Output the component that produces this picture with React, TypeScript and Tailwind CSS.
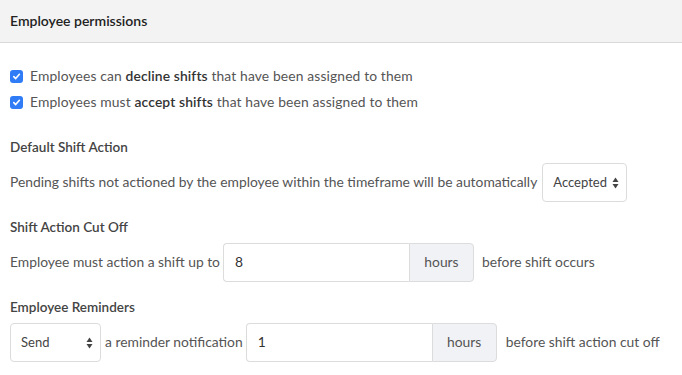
import React from "react";

const Check = () => (
  <span className="flex h-[13px] w-[13px] shrink-0 items-center justify-center rounded-[3px] bg-[#2f7cf6]">
    <svg width="9" height="9" viewBox="0 0 10 10" fill="none">
      <path d="M2 5.2 L4.1 7.3 L8.2 2.6" stroke="white" strokeWidth="1.8" strokeLinecap="round" strokeLinejoin="round" />
    </svg>
  </span>
);

const Arrows = () => (
  <svg width="7" height="12" viewBox="0 0 7 12" className="shrink-0">
    <path d="M3.5 0.5 L6.5 5 L0.5 5 Z" fill="#444" />
    <path d="M3.5 11.5 L6.5 7 L0.5 7 Z" fill="#444" />
  </svg>
);

const Select = ({ value, w }: { value: string; w: string }) => (
  <div className={`flex h-[39px] ${w} shrink-0 items-center justify-between rounded-[4px] border border-[#dcdcdc] bg-white pl-[10px] pr-[7px] text-[13px] text-[#444]`}>
    <span>{value}</span>
    <Arrows />
  </div>
);

const HoursInput = ({ value }: { value: string }) => (
  <div className="flex h-[39px] shrink-0">
    <div className="flex w-[186px] items-center rounded-l-[4px] border border-r-0 border-[#dcdcdc] bg-white pl-[11px] text-[#333]">
      {value}
    </div>
    <div className="flex w-[65px] items-center justify-center rounded-r-[4px] border border-[#dcdcdc] bg-[#f1f2f5] text-[#555]">
      hours
    </div>
  </div>
);

export default function App() {
  return (
    <div className="h-[375px] w-[682px] overflow-hidden bg-white text-[13.85px] text-[#555]" style={{ fontFamily: "Lato, 'Open Sans', sans-serif" }}>
      <div className="flex h-[43px] items-center border-b border-[#d8d8d8] bg-[#f3f3f3] px-[10px] pb-[2px] text-[#222]">
        <span className="text-[14px] font-semibold">Employee permissions</span>
      </div>
      <div className="px-[10px] pt-[20px]">
        <div className="flex h-[26px] items-center gap-[7px]">
          <Check />
          <span className="tracking-[0.13px]">
            Employees can <b className="font-semibold text-[#333]">decline shifts</b> that have been assigned to them
          </span>
        </div>
        <div className="flex h-[26px] items-center gap-[7px]">
          <Check />
          <span className="tracking-[0.13px]">
            Employees must <b className="font-semibold text-[#333]">accept shifts</b> that have been assigned to them
          </span>
        </div>

        <div className="mt-[22px] flex h-[20px] items-center text-[13.5px] font-semibold text-[#444]">Default Shift Action</div>
        <div className="mt-[6px] flex items-center gap-[5px]">
          <span>Pending shifts not actioned by the employee within the timeframe will be automatically</span>
          <Select value="Accepted" w="w-[85px]" />
        </div>

        <div className="mt-[15px] flex h-[20px] items-center text-[13.5px] font-semibold text-[#444]">Shift Action Cut Off</div>
        <div className="mt-[6px] flex items-center">
          <span className="mr-[3px]">Employee must action a shift up to</span>
          <HoursInput value="8" />
          <span className="ml-[8px]">before shift occurs</span>
        </div>

        <div className="mt-[15px] flex h-[20px] items-center text-[13.5px] font-semibold text-[#444]">Employee Reminders</div>
        <div className="mt-[6px] flex items-center">
          <Select value="Send" w="w-[91px]" />
          <span className="ml-[4px] mr-[3px]">a reminder notification</span>
          <HoursInput value="1" />
          <span className="ml-[9px]">before shift action cut off</span>
        </div>
      </div>
    </div>
  );
}
